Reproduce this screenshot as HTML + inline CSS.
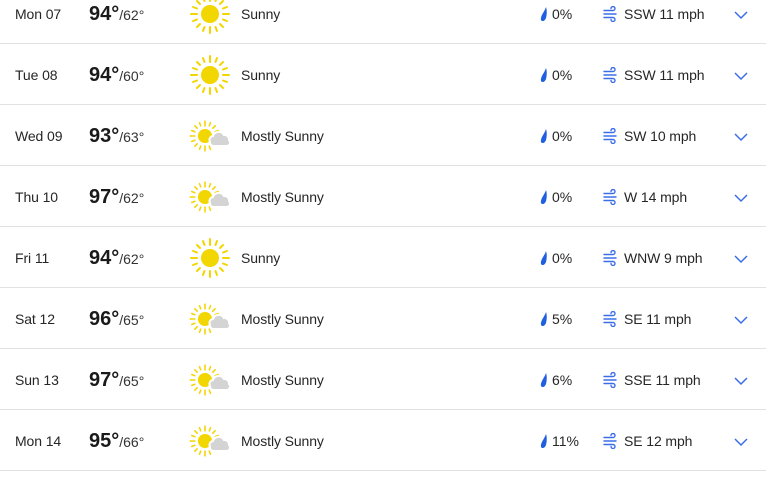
<!DOCTYPE html><html><head><style>
body{margin:0;width:774px;height:474px;background:#fff;font-family:"Liberation Sans",sans-serif;color:#262626;position:relative;overflow:hidden}
.r{position:absolute;left:0;width:774px;height:61px}
.r:after{content:"";position:absolute;left:0;width:766px;top:43px;height:1px;background:#e1e1e1}
.d{position:absolute;left:15px;top:6px;font-size:14px;letter-spacing:-0.1px}
.t{position:absolute;left:89px;top:3px;font-size:20px;font-weight:bold;color:#1a1a1a}
.t span{font-size:14px;font-weight:normal;color:#333}
.i{position:absolute;left:188px;top:-8px}
.c{position:absolute;left:241px;top:6px;font-size:14px;letter-spacing:-0.1px}
.p{position:absolute;left:539px;top:6px;font-size:14px}
.w{position:absolute;left:603px;top:6px;font-size:14px;letter-spacing:-0.1px}
.v{position:absolute;left:734px;top:10px}
</style></head><body>
<svg width="0" height="0" style="position:absolute"><defs>
<g id="sun"><g stroke="#f2d600" stroke-width="2" stroke-linecap="round">
<line x1="22" y1="3" x2="22" y2="9"/><line x1="22" y1="35" x2="22" y2="41"/><line x1="3" y1="22" x2="9" y2="22"/><line x1="35" y1="22" x2="41" y2="22"/>
<line x1="9" y1="9" x2="12" y2="12"/><line x1="32" y1="32" x2="35" y2="35"/><line x1="35" y1="9" x2="32" y2="12"/><line x1="9" y1="35" x2="12" y2="32"/>
<line x1="15" y1="5" x2="16.5" y2="9"/><line x1="29" y1="5" x2="27.5" y2="9"/><line x1="15" y1="39" x2="16.5" y2="35"/><line x1="29" y1="39" x2="27.5" y2="35"/>
<line x1="5" y1="15" x2="9" y2="16.5"/><line x1="5" y1="29" x2="9" y2="27.5"/><line x1="39" y1="15" x2="35" y2="16.5"/><line x1="39" y1="29" x2="35" y2="27.5"/></g>
<circle cx="22" cy="22" r="9" fill="#f2d600"/></g>
<g id="ms"><g transform="translate(17,22) scale(0.78) translate(-22,-22)"><use href="#sun"/></g>
<path d="M22 28 a4 4 0 0 1 3-6 a6 6 0 0 1 11-1 a4.5 4.5 0 0 1 5 5 a3.5 3.5 0 0 1-2 6 h-14 a3.5 3.5 0 0 1-3-4z" fill="#d4d4d4" stroke="#fff" stroke-width="2"/></g>
<g id="drop"><path d="M7 1 C6 5 1 10 2 14 C3 16 6 15 7 12 C8 8 8 4 7 1z" fill="#1f5fe0"/></g>
<g id="wind"><path d="M1 4.5h9a2 2 0 1 0-2-2M1 8h12M1 11.5h9a2 2 0 1 1-2 2" fill="none" stroke="#3a6ee8" stroke-width="1.4" stroke-linecap="round"/></g>
</defs></svg>
<div id="rows"></div>
<script>
var D=[["Mon 07","94","62","Sunny","0%","SSW 11 mph",0],["Tue 08","94","60","Sunny","0%","SSW 11 mph",0],["Wed 09","93","63","Mostly Sunny","0%","SW 10 mph",1],["Thu 10","97","62","Mostly Sunny","0%","W 14 mph",1],["Fri 11","94","62","Sunny","0%","WNW 9 mph",0],["Sat 12","96","65","Mostly Sunny","5%","SE 11 mph",1],["Sun 13","97","65","Mostly Sunny","6%","SSE 11 mph",1],["Mon 14","95","66","Mostly Sunny","11%","SE 12 mph",1]];
var h="";D.forEach(function(r,k){h+='<div class="r" style="top:'+(k*61)+'px"><div class="d">'+r[0]+'</div><div class="t">'+r[1]+'°<span>/'+r[2]+'°</span></div><svg class="i" width="44" height="44"><use href="#'+(r[6]?'ms':'sun')+'"/></svg><div class="c">'+r[3]+'</div><div class="p"><svg width="10" height="16" style="vertical-align:-3px;margin-right:3px"><use href="#drop"/></svg>'+r[4]+'</div><div class="w"><svg width="16" height="16" style="vertical-align:-3px;margin-right:5px"><use href="#wind"/></svg>'+r[5]+'</div><svg class="v" width="14" height="10"><path d="M1 2l6 6 6-6" fill="none" stroke="#3a6ee8" stroke-width="1.5"/></svg></div>'});
document.getElementById("rows").innerHTML=h;
</script>
</body></html>
